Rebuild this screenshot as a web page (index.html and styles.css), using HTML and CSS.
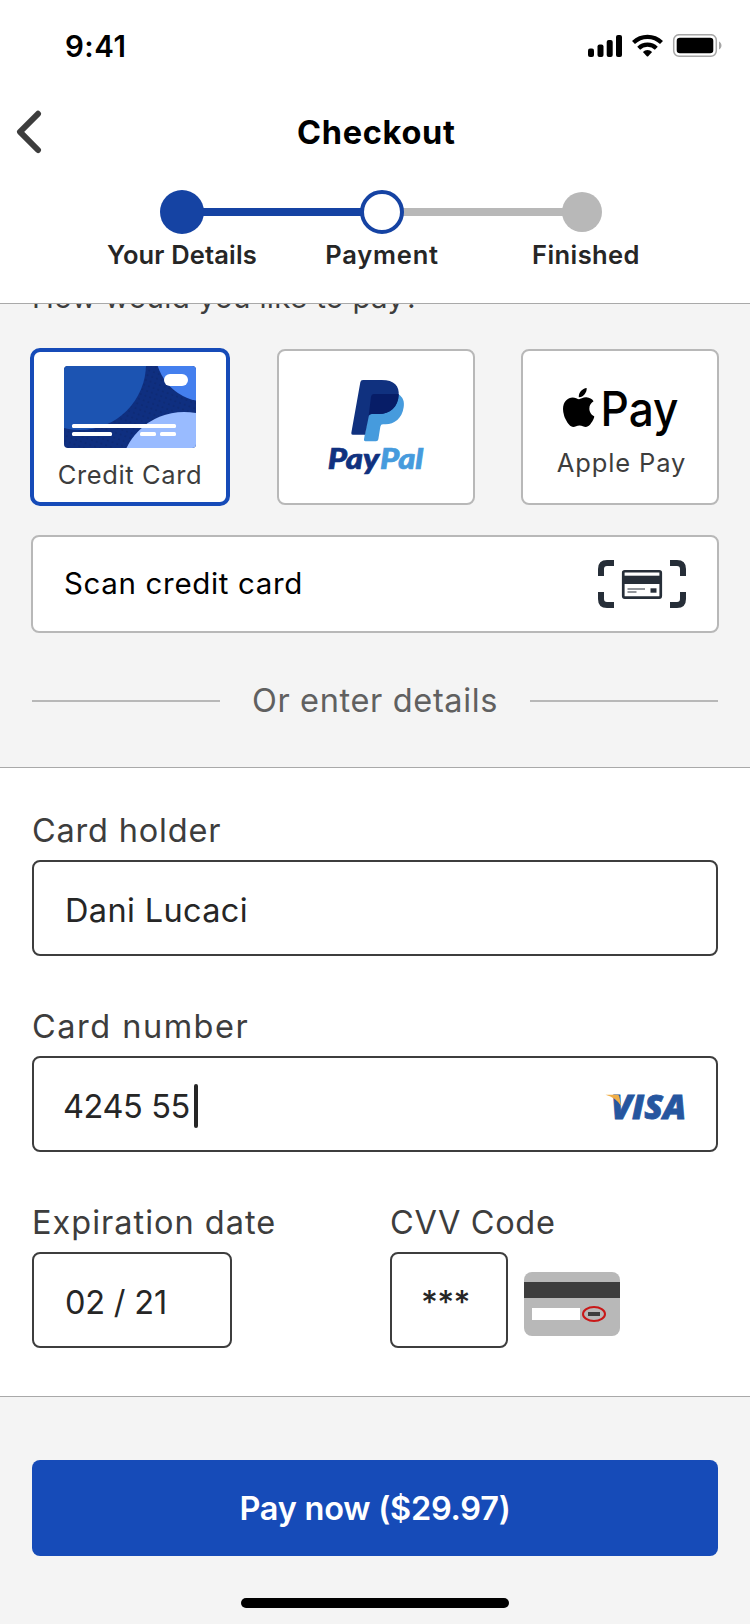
FILE: index.html
```html
<!DOCTYPE html>
<html lang="en">
<head>
<meta charset="utf-8">
<title>Checkout</title>
<link rel="stylesheet" href="styles.css">
</head>
<body>
<div class="screen">
  <header class="header">
    <div class="status">
      <span class="time">9:41</span>
      <svg class="status-icons" width="136" height="26" viewBox="0 0 136 26">
        <rect x="0" y="14.500" width="6" height="8.500" rx="2"/>
        <rect x="9.500" y="10.500" width="6" height="12.500" rx="2"/>
        <rect x="18.700" y="6" width="6" height="17" rx="2"/>
        <rect x="28" y="1" width="6" height="22" rx="2"/>
        <g fill="none" stroke="#000" stroke-width="4.200">
          <path d="M45.500 8.600a20 20 0 0 1 28 0"/>
          <path d="M50.700 14.300a12.600 12.600 0 0 1 17.600 0"/>
        </g>
        <path d="M54.900 17.900a6.500 6.500 0 0 1 9.200 0l-3.900 4.300q-.7.700-1.400 0z"/>
        <rect x="85.700" y=".700" width="42.600" height="21.600" rx="5.500" fill="none" stroke="#a6a6a6" stroke-width="1.500"/>
        <rect x="88.700" y="3.700" width="36.600" height="15.600" rx="3.200"/>
        <path d="M131 7.500c3.300 1.600 3.300 6.400 0 8z" fill="#a6a6a6"/>
      </svg>
    </div>
    <div class="nav">
      <svg class="back" width="26" height="44" viewBox="0 0 26 44"><path d="M22 3.800 4 21.800 22 40" fill="none" stroke="#3d3d3d" stroke-width="6" stroke-linecap="round" stroke-linejoin="round"/></svg>
      <h1 class="title">Checkout</h1>
    </div>
    <div class="steps">
      <span class="dot done"></span><span class="bar done-bar"></span><span class="dot current"></span><span class="bar todo-bar"></span><span class="dot todo"></span>
    </div>
    <div class="step-labels">
      <span class="l-details">Your Details</span><span class="l-payment">Payment</span><span class="l-finished">Finished</span>
    </div>
  </header>

  <section class="methods">
    <p class="question">How would you like to pay?</p>
    <div class="cards">
      <div class="card selected">
        <svg class="card-art" width="132" height="82" viewBox="64 366 132 82">
          <defs>
            <clipPath id="art"><rect x="64" y="366" width="132" height="82" rx="4"/></clipPath>
            <pattern id="dots" width="5" height="5" patternUnits="userSpaceOnUse" patternTransform="rotate(20)"><circle cx="2" cy="2" r=".6" fill="#0a1c55"/></pattern>
          </defs>
          <g clip-path="url(#art)">
            <rect x="64" y="366" width="132" height="82" fill="#0f2f80"/>
            <rect x="64" y="366" width="132" height="82" fill="url(#dots)"/>
            <circle cx="80" cy="364" r="66" fill="#1c54b2"/>
            <circle cx="206" cy="351" r="50.500" fill="#447fee"/>
            <circle cx="184" cy="476" r="64" fill="#99bbff"/>
          </g>
          <g fill="#fff">
            <rect x="164" y="374" width="24" height="12" rx="6"/>
            <rect x="72" y="424" width="104" height="4" rx="1.500"/>
            <rect x="72" y="432" width="40" height="4" rx="1.500"/>
            <rect x="140" y="432" width="16" height="4" rx="1.500"/>
            <rect x="160" y="432" width="16" height="4" rx="1.500"/>
          </g>
        </svg>
        <span class="card-name name-credit">Credit Card</span>
      </div>
      <div class="card paypal">
        <svg width="115" height="115" viewBox="0 0 345 345">
          <path d="M158 72H238C252 82 257 94 254 112C249 146 226 163 200 163H192Q185 163 184 170L178 208Q177 214 171 214H139Q134 214 135 208Z" fill="#469bdd"/>
          <path d="M132 30H188C226 30 242 48 239 77C235 112 212 132 180 132H158Q150 132 149 140L138 194H101Q96 194 97 188L124 37Q125 30 132 30Z" fill="#10317f"/>
          <path d="M164 72H239C239 112 212 132 180 132H158Q152 132 149 137L156 80Q157 72 164 72Z" fill="#071d67"/>
          <g class="pp-word"><text x="26" y="296" fill="#10317f" stroke="#10317f" textLength="155" lengthAdjust="spacingAndGlyphs">Pay</text><text x="183" y="296" fill="#469bdd" stroke="#469bdd" textLength="130" lengthAdjust="spacingAndGlyphs">Pal</text></g>
        </svg>
      </div>
      <div class="card apple">
        <svg width="118" height="72" viewBox="560 376 118 72">
          <svg x="562" y="388" width="31.500" height="39" viewBox="4 32 376 448" preserveAspectRatio="none"><path d="M318.700 268.700c-.2-36.700 16.400-64.400 50-84.800-18.800-26.900-47.200-41.700-84.700-44.600-35.500-2.800-74.300 20.700-88.500 20.700-15 0-49.400-19.700-76.400-19.700C63.300 141.200 4 184.800 4 273.500q0 39.300 14.400 81.200c12.800 36.700 59 126.700 107.200 125.200 25.200-.6 43-17.900 75.800-17.900 31.800 0 48.300 17.900 76.400 17.900 48.600-.7 90.400-82.500 102.600-119.300-65.200-30.700-61.700-90-61.700-91.900zm-56.600-164.200c27.300-32.400 24.800-61.900 24-72.500-24.100 1.400-52 16.400-67.900 34.900-17.500 19.800-27.800 44.300-25.600 71.900 26.100 2 49.900-11.400 69.500-34.300z"/></svg>
          <text class="ap-word" x="599.500" y="426" textLength="78" lengthAdjust="spacingAndGlyphs">Pay</text>
        </svg>
        <span class="card-name name-apple">Apple Pay</span>
      </div>
    </div>
    <div class="scan">
      <span class="scan-text">Scan credit card</span>
      <svg width="88" height="48" viewBox="0 0 88 48">
        <path d="M3 16V9Q3 3 9 3H16M72 3H79Q85 3 85 9V16M3 32V39Q3 45 9 45H16M72 45H79Q85 45 85 39V32" fill="none" stroke="#262e38" stroke-width="6"/>
        <rect x="25.250" y="11.250" width="37.500" height="26.300" rx="1.500" fill="#fff" stroke="#262e38" stroke-width="2.700"/>
        <rect x="25" y="15.700" width="38" height="8.300" fill="#262e38"/>
        <path d="M29.500 29H47M29.500 32H38.500" stroke="#262e38" stroke-width="1.200"/>
        <rect x="52.500" y="28.300" width="6" height="4.400" fill="#262e38"/>
      </svg>
    </div>
    <div class="divider"><span class="rule"></span><span class="or">Or enter details</span><span class="rule"></span></div>
  </section>

  <section class="form">
    <label class="label l-holder">Card holder</label>
    <div class="input"><span class="v-holder">Dani Lucaci</span></div>
    <label class="label l-number gap">Card number</label>
    <div class="input"><span class="v-number">4245 55</span><span class="caret"></span>
      <svg class="visa" width="86" height="44" viewBox="605 1083 86 44">
        <text class="visa-word" x="612" y="1117" textLength="75" lengthAdjust="spacingAndGlyphs">VISA</text>
        <path d="M606.500 1092.700H618.500Q620 1092.700 620.300 1094.500L622.200 1104Q617 1095.500 606.500 1092.700Z" fill="#f0ae47"/>
      </svg>
    </div>
    <div class="row gap">
      <div class="col-exp">
        <label class="label l-exp">Expiration date</label>
        <div class="input exp"><span class="v-exp">02 / 21</span></div>
      </div>
      <div class="col-cvv">
        <label class="label l-cvv">CVV Code</label>
        <div class="cvv-row">
          <div class="input cvv"><span class="v-cvv">***</span></div>
          <svg class="cvv-card" width="96" height="64" viewBox="0 0 96 64">
            <rect width="96" height="64" rx="8" fill="#b8b8b8"/>
            <rect y="10" width="96" height="16" fill="#3d3d3d"/>
            <rect x="8" y="36" width="48" height="12" fill="#fff"/>
            <rect x="64" y="40" width="12" height="4" fill="#3d3d3d"/>
            <ellipse cx="70" cy="42" rx="11" ry="7" fill="none" stroke="#c91818" stroke-width="2"/>
          </svg>
        </div>
      </div>
    </div>
  </section>

  <footer class="footer">
    <button class="pay"><span class="pay-text">Pay now ($29.97)</span></button>
    <span class="home"></span>
  </footer>
</div>
</body>
</html>
```
FILE: styles.css
```css
* { box-sizing: border-box; }
body { margin: 0; font-family: Inter, "Liberation Sans", sans-serif; background: #fff; }
.screen { width: 750px; height: 1624px; display: flex; flex-direction: column; overflow: hidden; background: #f4f4f4; }
.screen span, .label, .title, .question { white-space: nowrap; }
svg { display: block; flex: none; }

.header { height: 304px; background: #fff; border-bottom: 1px solid #a9a9a9; flex: none; }
.status { height: 92px; padding: 0 28px 0 65px; display: flex; justify-content: space-between; align-items: center; }
.time { font-size: 29.5px; font-weight: 600; line-height: 40px; letter-spacing: 0.5px; }
.status-icons { margin: 2px -2px 0 0; }
.nav { height: 80px; padding-left: 16px; display: grid; grid-template-columns: 26px 1fr; align-items: center; }
.title { margin: 2px 0 0 255px; font-size: 32.5px; font-weight: 700; line-height: 40px; letter-spacing: 0.7px; }
.steps { display: flex; align-items: center; width: 444px; height: 44px; margin: 18px 0 0 160px; }
.dot { flex: none; width: 44px; height: 44px; border-radius: 50%; position: relative; z-index: 1; }
.done { background: #1543a3; }
.current { border: 4px solid #1543a3; background: #fff; }
.todo { width: 40px; height: 40px; background: #b8b8b8; }
.bar { width: 158px; height: 8px; margin: 0 -1px; flex: none; background: #b8b8b8; }
.done-bar { background: #1543a3; }
.todo-bar { width: 160px; }
.step-labels { display: grid; grid-template-columns: 200px 200px 208px; margin-left: 82px; line-height: 42px; font-size: 25.5px; font-weight: 600; color: #262626; text-align: center; }
.l-details { letter-spacing: 0.15px; }
.l-payment { letter-spacing: 0.8px; }
.l-finished { letter-spacing: 0.4px; }

.methods { flex: none; height: 464px; overflow: hidden; border-bottom: 1px solid #a9a9a9; }
.question { margin: -26px 0 31px 32px; font-size: 29.5px; line-height: 39px; letter-spacing: 0.3px; color: #3d3d3d; }
.cards { display: flex; align-items: center; gap: 46px; padding-left: 30px; }
.card { width: 198px; height: 156px; flex: none; border: 2px solid #b8b8b8; border-radius: 8px; background: #fff; display: flex; flex-direction: column; align-items: center; }
.selected { width: 200px; height: 158px; border: 4px solid #164bb8; border-radius: 10px; padding-top: 14px; }
.card-name { font-size: 25.5px; line-height: 40px; color: #3d3d3d; }
.name-credit { margin-top: 7px; letter-spacing: 0.6px; }
.paypal { margin-left: 1px; padding: 19px 0 0 1px; }
.pp-word { font: italic 900 84px Lato, sans-serif; stroke-width: 2px; }
.apple { padding-top: 25px; }
.ap-word { font: 500 48px Inter, sans-serif; }
.name-apple { margin: -5px 0 0 3px; letter-spacing: 0.9px; }
.scan { width: 688px; height: 98px; margin: 29px 0 0 31px; padding: 0 31px 0 31px; display: flex; justify-content: space-between; align-items: center; border: 2px solid #b8b8b8; border-radius: 8px; background: #fff; }
.scan-text { font-size: 29.5px; letter-spacing: 0.65px; padding-bottom: 2px; color: #000; }
.divider { height: 136px; padding: 0 32px; display: flex; justify-content: space-between; align-items: center; }
.rule { width: 188px; height: 2px; background: #b8b8b8; }
.or { font-size: 32.5px; line-height: 40px; letter-spacing: 0.65px; color: #606060; }

.form { flex: none; height: 629px; padding: 32px 32px 0; background: #fff; border-bottom: 1px solid #a9a9a9; }
.label { display: block; height: 60px; font-size: 32.5px; line-height: 62px; color: #3d3d3d; }
.l-holder { letter-spacing: 0.8px; }
.l-number { letter-spacing: 1.5px; }
.l-exp { letter-spacing: 1px; }
.l-cvv { letter-spacing: 0.65px; }
.gap { margin-top: 40px; }
.input { height: 96px; border: 2px solid #3d3d3d; border-radius: 8px; padding: 5px 30px 0; display: flex; align-items: center; font-size: 32.5px; line-height: 40px; color: #262626; background: #fff; }
.v-holder { letter-spacing: 0.35px; padding-left: 1px; }
.v-number { letter-spacing: -0.4px; margin-left: -1px; }
.v-exp { padding-left: 1px; letter-spacing: -0.2px; }
.v-cvv { letter-spacing: -0.7px; font-weight: 500; }
.caret { width: 4px; height: 44px; border-radius: 2px; margin: 0 0 1px 4px; background: #262626; }
.visa { margin: 0 -4px 0 auto; }
.visa-word { font: italic 800 34px "Open Sans", sans-serif; fill: #26569f; stroke: #26569f; stroke-width: 0.8px; }
.row { display: flex; }
.col-exp { width: 358px; }
.exp { width: 200px; }
.cvv-row { display: flex; align-items: center; gap: 16px; }
.cvv { width: 118px; padding-left: 29px; }
.cvv-card { margin-top: 8px; }

.footer { flex: 1; padding: 63px 32px 0; display: flex; flex-direction: column; align-items: center; }
.pay { width: 686px; height: 96px; padding: 2px 0 0; border: 0; border-radius: 8px; background: #164bb8; color: #fff; font: 600 32.5px/40px Inter, sans-serif; letter-spacing: -0.25px; }
.home { width: 268px; height: 10px; margin-top: 42px; border-radius: 5px; background: #000; }
```
